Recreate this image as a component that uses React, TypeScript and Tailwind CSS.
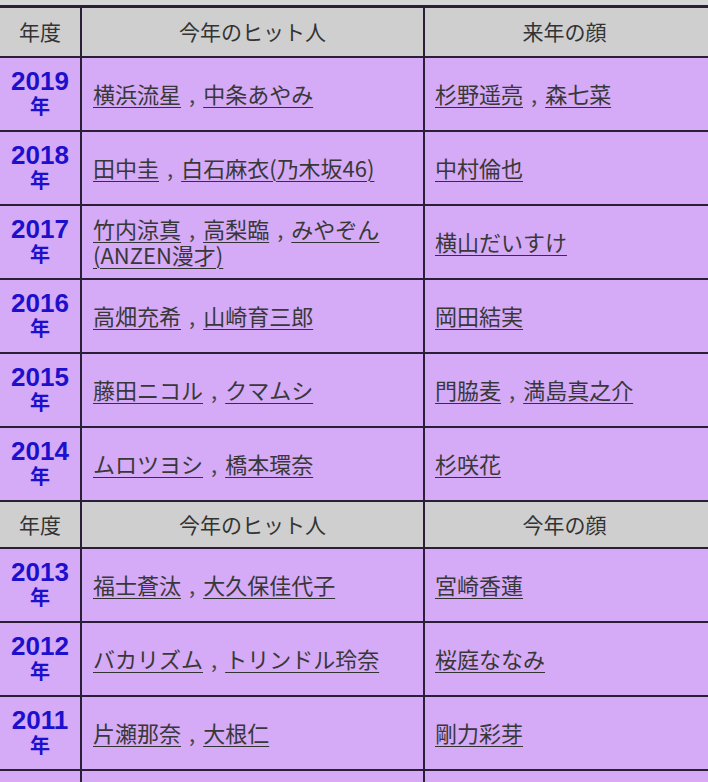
const rowsA = [
  { year: "2019", hit: [["横浜流星", "中条あやみ"]], face: ["杉野遥亮", "森七菜"] },
  { year: "2018", hit: [["田中圭", "白石麻衣(乃木坂46)"]], face: ["中村倫也"] },
  { year: "2017", hit: [["竹内涼真", "高梨臨", "みやぞん"], ["(ANZEN漫才)"]], face: ["横山だいすけ"] },
  { year: "2016", hit: [["高畑充希", "山崎育三郎"]], face: ["岡田結実"] },
  { year: "2015", hit: [["藤田ニコル", "クマムシ"]], face: ["門脇麦", "満島真之介"] },
  { year: "2014", hit: [["ムロツヨシ", "橋本環奈"]], face: ["杉咲花"] },
];

const rowsB = [
  { year: "2013", hit: [["福士蒼汰", "大久保佳代子"]], face: ["宮崎香蓮"] },
  { year: "2012", hit: [["バカリズム", "トリンドル玲奈"]], face: ["桜庭ななみ"] },
  { year: "2011", hit: [["片瀬那奈", "大根仁"]], face: ["剛力彩芽"] },
];

const jp = { fontFamily: '"Noto Sans CJK JP", "Noto Sans", sans-serif' };

function Names({ names }: { names: string[] }) {
  return (
    <span>
      {names.map((n, i) => (
        <span key={n}>
          {i > 0 && <span className="mx-[8px] text-[#444]">,</span>}
          <a className="underline decoration-1 underline-offset-[4px] text-[#383838] decoration-[#333]">{n}</a>
        </span>
      ))}
    </span>
  );
}

function Header({ title3, h }: { title3: string; h: string }) {
  return (
    <div className={`grid grid-cols-[82px_343px_1fr] bg-[#cfcfcf] border-b-2 border-[#2b1f38] text-[#333] text-[21px] ${h}`}>
      <div className="flex items-center justify-center border-r-2 border-[#2b1f38]">年度</div>
      <div className="flex items-center justify-center border-r-2 border-[#2b1f38]">今年のヒット人</div>
      <div className="flex items-center justify-center pr-[4px]">{title3}</div>
    </div>
  );
}

function Row({ r }: { r: { year: string; hit: string[][]; face: string[] } }) {
  return (
    <div className="grid grid-cols-[82px_343px_1fr] h-[74px] bg-[#d5aaf6] border-b-2 border-[#2b1f38]">
      <div className="flex flex-col items-center justify-center border-r-2 border-[#2b1f38] text-[#1c10cc] font-bold pb-[2px]">
        <span className="text-[26px] leading-[26px]" style={{ fontFamily: '"Liberation Sans", Arial, sans-serif' }}>{r.year}</span>
        <span className="text-[20px] leading-[24px]">年</span>
      </div>
      <div className="flex flex-col justify-center pl-[11px] border-r-2 border-[#2b1f38] text-[22px] leading-[26px] pb-[3px]">
        {r.hit.map((line, i) => (
          <div key={i}>
            <Names names={line} />
          </div>
        ))}
      </div>
      <div className="flex items-center pl-[10px] text-[22px] leading-[26px] pb-[3px]">
        <Names names={r.face} />
      </div>
    </div>
  );
}

export default function App() {
  return (
    <div className="w-[708px] h-[782px] overflow-hidden bg-[#d5aaf6]" style={jp}>
      <div className="h-[5px] bg-[#d6d6d6]" />
      <div className="border-t-[3px] border-[#2b1f38]">
        <Header title3="来年の顔" h="h-[50px]" />
        {rowsA.map((r) => (
          <Row key={r.year} r={r} />
        ))}
        <Header title3="今年の顔" h="h-[47px]" />
        {rowsB.map((r) => (
          <Row key={r.year} r={r} />
        ))}
        <div className="grid grid-cols-[82px_343px_1fr] h-[74px] bg-[#d5aaf6]">
          <div className="border-r-2 border-[#2b1f38]" />
          <div className="border-r-2 border-[#2b1f38]" />
          <div />
        </div>
      </div>
    </div>
  );
}
